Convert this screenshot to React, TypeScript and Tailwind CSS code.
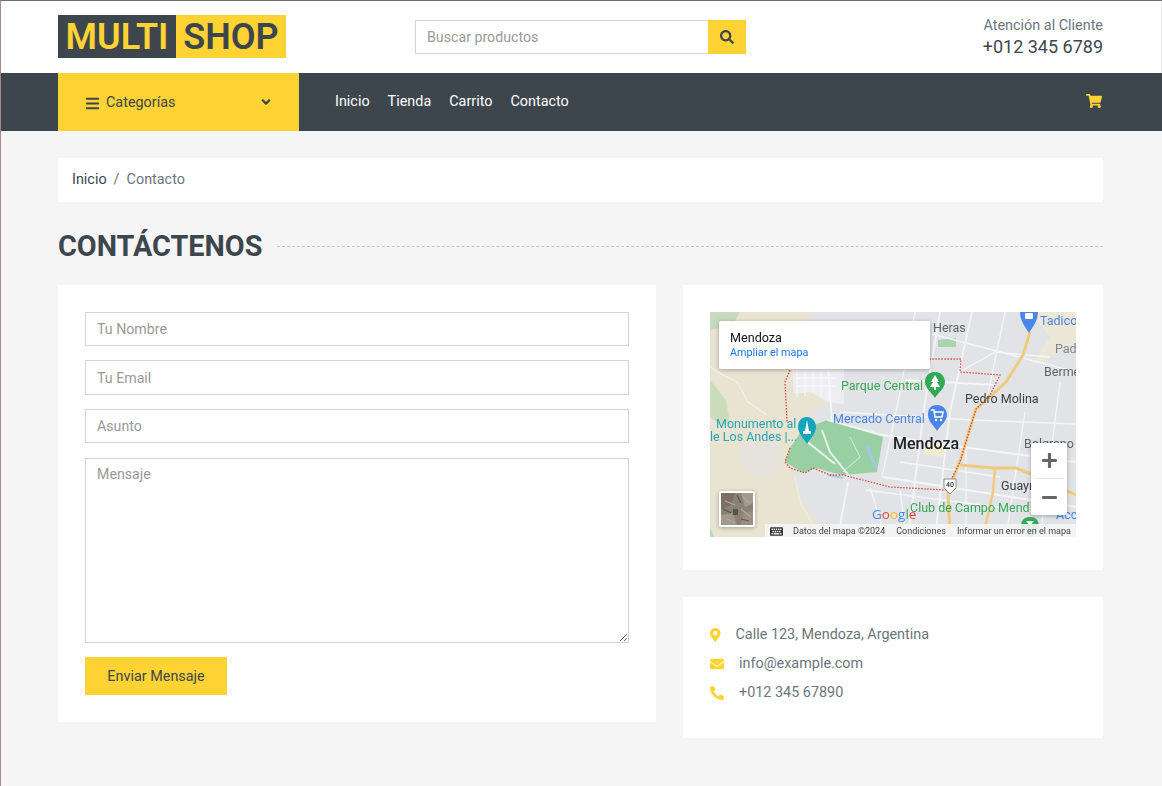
import { FaBars, FaAngleDown, FaSearch, FaShoppingCart, FaMapMarkerAlt, FaEnvelope, FaPhoneAlt, FaKeyboard, FaPlus, FaMinus } from "react-icons/fa";

function MapArt() {
  const green = "#34a853";
  return (
    <svg viewBox="0 0 366 225" width="366" height="225" className="block blur-[0.35px]" style={{ fontFamily: "Roboto, sans-serif" }}>
      <rect width="366" height="225" fill="#e2e3e7" />
      <path d="M0 0H100V60L117 62L118 90L100 100L80 136L85 165L92 190L120 225H0Z" fill="#e9e3d2" />
      <path d="M0 0H30L22 14L0 18Z" fill="#c6dabc" />
      <path d="M0 68L16 88L20 112L8 112L0 104Z" fill="#cbdcbd" />
      <path d="M30 132L68 130L70 160L42 165L30 150Z" fill="#e6e3dc" />
      <path d="M0 215L4 225H0Z" fill="#bcd6b7" />
      <path d="M320 0H366V30L340 45L320 55L340 25Z" fill="#ece7d6" />
      <path d="M82 57H134V92L118 90L100 80L84 82Z" fill="#eeeef2" />
      <path d="M228 28L246 26L246 35L228 35Z" fill="#a9d4b0" />
      <path d="M215 130L240 132L232 145L214 142Z" fill="#f1ebcf" />
      <path d="M80 136L92 118L117 108L173 125L167 160L133 163L120 160L107 156L93 161L75 150Z" fill="#98d0a3" />
      <path d="M157 133C160 142 163 150 167 156" stroke="#a7c6e6" strokeWidth="3" fill="none" />
      <path d="M118 163L133 166" stroke="#a7c6e6" strokeWidth="2" fill="none" />

      <g stroke="#f7f8fa" fill="none" strokeWidth="1.3" opacity="0.85">
        <path d="M87 58V85M95 58V84M103 58V80M111 58V84M119 60V88M87 66H126M87 74H126" />
        <path d="M117 40L122 110" strokeWidth="2" />
        <path d="M0 55L13 63L27 70L38 90L57 103" opacity="0.75" />
        <path d="M117 108L173 123L230 132L366 150" strokeWidth="1.8" />
        <path d="M112 118L120 140L140 165" strokeWidth="2" />
        <path d="M95 128L125 152" strokeWidth="2" />
        <path d="M140 125L150 145L133 160" strokeWidth="0.8" />
        <path d="M173 165L366 195" strokeWidth="1.8" />
        <path d="M205 0L188 90L172 165" />
        <path d="M230 0L215 90L198 225" strokeWidth="1.8" />
        <path d="M262 0L240 100L225 225" strokeWidth="1.8" />
        <path d="M295 0L278 82" />
        <path d="M315 100L296 225" />
        <path d="M350 70L330 225" />
        <path d="M130 100L262 108L366 112" />
        <path d="M195 68L285 73" strokeWidth="1.8" />
        <path d="M222 22L366 60" />
        <path d="M250 60L285 40L340 45" />
        <path d="M190 150L290 165" />
        <path d="M155 178L366 205" />
        <path d="M138 170L128 225" strokeWidth="1.8" />
        <path d="M160 175L175 225" />
        <path d="M190 178L196 225" />
        <path d="M256 130V225" />
        <path d="M85 165L90 190L110 225" opacity="0.5" />
      </g>
      <g stroke="#f0ca7c" fill="none" strokeWidth="3" strokeLinejoin="round">
        <path d="M320 20L313 43L296 70L283 82L266 97L261 113L251 146L238 180L240 225" />
        <path d="M250 153L283 156L306 156L323 163L366 183" />
        <path d="M285 156L283 180L273 225" strokeWidth="2.5" />
      </g>
      <path d="M80 58L75 70L77 110M80 136L75 150L80 156L95 161L103 156L120 163L133 163L180 175L236 178L250 150L261 113L266 97L280 83L290 63L250 60L251 47L220 47" stroke="#d9483f" strokeWidth="1.3" strokeDasharray="1.5 1.5" fill="none" />

      <text x="223" y="20" fontSize="12.5" fill="#5f6368">Heras</text>
      <path d="M310 0C310 9 316 16 319 21C322 16 328 9 328 0Z" fill="#4a86e8" />
      <rect x="315" y="1" width="8" height="6" rx="1" fill="#fff" />
      <text x="330" y="13" fontSize="12.5" fill="#4a86e8">Tadico</text>
      <text x="345" y="41" fontSize="12.5" fill="#80868b">Pad</text>
      <text x="334" y="64" fontSize="12.5" fill="#5f6368">Berme</text>
      <text x="131" y="78" fontSize="12.5" fill={green}>Parque Central</text>
      <path d="M225 60C217 60 215 66 215 70C215 76 222 81 225 86C228 81 235 76 235 70C235 66 232 60 225 60Z" fill={green} />
      <path d="M225 63L229 70H227L230 75H226V78H224V75H220L223 70H221Z" fill="#fff" />
      <text x="255" y="91" fontSize="12.5" fill="#3c4043">Pedro Molina</text>
      <text x="123" y="111" fontSize="12.5" fill="#4a86e8">Mercado Central</text>
      <path d="M227 93C219 93 218 99 218 103C218 109 224 114 227 119C230 114 237 109 237 103C237 99 234 93 227 93Z" fill="#4a86e8" />
      <path d="M221 98H224L225 105H232L233 100H225" stroke="#fff" strokeWidth="1.6" fill="none" />
      <circle cx="226" cy="108" r="1.2" fill="#fff" /><circle cx="231" cy="108" r="1.2" fill="#fff" />
      <text x="6" y="116" fontSize="12.5" fill="#26a6b8">Monumento al</text>
      <text x="0" y="129" fontSize="12.5" fill="#26a6b8">le Los Andes |...</text>
      <path d="M97 105C90 105 88 111 88 115C88 121 94 127 97 132C100 127 106 121 106 115C106 111 103 105 97 105Z" fill="#12a5bd" />
      <path d="M97 108L99 119H101V122H93V119H95Z" fill="#fff" />
      <text x="183" y="137" fontSize="16" fontWeight="500" fill="#202124">Mendoza</text>
      <text x="314" y="136" fontSize="12.5" fill="#5f6368">Bolgrano</text>
      <path d="M234 167H246V176L240 182L234 176Z" fill="#fff" stroke="#777" strokeWidth="0.8" />
      <text x="236" y="175" fontSize="7" fontWeight="500" fill="#333">40</text>
      <text x="291" y="178" fontSize="12.5" fill="#3c4043">Guayı</text>
      <text x="200" y="200" fontSize="12.5" fill={green}>Club de Campo Mend</text>
      <path d="M320 205C313 205 311 210 311 214C311 219 316 224 320 225C324 224 329 219 329 214C329 210 327 205 320 205Z" fill={green} />
      <path d="M316 209H324L320 214Z" fill="#fff" />
      <text x="346" y="207" fontSize="12.5" fill="#4a86e8">Acc</text>
      <text x="162" y="207" fontSize="13.5" fontWeight="500" fontFamily="Open Sans, sans-serif">
        <tspan fill="#4285f4">G</tspan><tspan fill="#ea4335">o</tspan><tspan fill="#fbbc05">o</tspan><tspan fill="#4285f4">g</tspan><tspan fill="#34a853">l</tspan><tspan fill="#ea4335">e</tspan>
      </text>
    </svg>
  );
}

function SatThumb() {
  return (
    <svg viewBox="0 0 32 32" width="32" height="32" className="block blur-[0.5px]">
      <rect width="32" height="32" fill="#8a8074" />
      <path d="M0 0H14L10 12L0 16Z" fill="#7a6f62" />
      <path d="M20 0H32V10L24 14Z" fill="#a39a8e" />
      <path d="M0 22L12 20L16 32H0Z" fill="#a1978a" />
      <path d="M22 20L32 18V32H20Z" fill="#9b8f83" />
      <rect x="12" y="16" width="5" height="6" fill="#4f5a44" />
      <path d="M4 8L14 12M20 16L30 24M6 26L14 30M22 4L28 10" stroke="#b3aa9e" strokeWidth="1.2" />
      <path d="M16 2L20 10M2 16L10 20M20 26L28 28" stroke="#5f564c" strokeWidth="1.2" />
    </svg>
  );
}

function Input({ placeholder, h }: { placeholder: string; h: string }) {
  return (
    <input
      readOnly
      placeholder={placeholder}
      className={`block w-full ${h} border border-[#ced4da] bg-white px-[11px] text-[14.2px] text-[#495057] outline-none placeholder:text-[#9a9a9a]`}
    />
  );
}

export default function App() {
  return (
    <div className="min-h-[786px] border-t border-l border-t-[#6e6e6e] border-l-[#a98a86] bg-[#f5f5f5] font-['Roboto',sans-serif] text-[#6c757d]">
      <header className="flex h-[72px] items-center border-r border-r-[#e8e8e8] bg-white pl-[57px] pr-[58px]">
        <div className="mt-[-1px] flex h-[43px] w-[228px] items-center text-[36px] font-semibold leading-none">
          <span className="flex h-full w-[118px] items-center justify-center bg-[#3d464d] text-[#ffd333]">MULTI</span>
          <span className="flex h-full w-[110px] items-center justify-center bg-[#ffd333] text-[#3d464d]">SHOP</span>
        </div>
        <div className="ml-[129px] mt-[-1px] flex h-[34px] w-[331px]">
          <input readOnly placeholder="Buscar productos" className="h-full min-w-0 flex-1 border border-[#ced4da] border-r-0 bg-white px-[11px] text-[14.2px] outline-none placeholder:text-[#9a9a9a]" />
          <div className="flex h-full w-[38px] items-center justify-center bg-[#ffd333] text-[#3d464d]">
            <FaSearch className="text-[14px]" />
          </div>
        </div>
        <div className="ml-auto mt-[-1px] text-right">
          <div className="text-[14.4px] leading-[20px]">Atención al Cliente</div>
          <div className="text-[18px] leading-[22px] text-[#3d464d]">+012 345 6789</div>
        </div>
      </header>

      <nav className="flex h-[58px] items-center bg-[#3d464d] pl-[57px] pr-[60px]">
        <div className="flex h-full w-[241px] items-center bg-[#ffd333] pl-[27px] pr-[27px] text-[#3d464d]">
          <FaBars className="mr-[6px] mt-[2px] text-[15px]" />
          <span className="mt-[2px] text-[14.4px]">Categorías</span>
          <FaAngleDown className="ml-auto mr-[-1px] text-[14px]" />
        </div>
        <div className="ml-[36px] flex gap-[18px] text-[14.4px] text-white">
          <span>Inicio</span>
          <span>Tienda</span>
          <span>Carrito</span>
          <span>Contacto</span>
        </div>
        <FaShoppingCart className="ml-auto mt-[-2px] text-[16px] text-[#ffd333]" />
      </nav>

      <main className="pl-[57px] pr-[58px] pt-[27px]">
        <div className="flex h-[44px] w-[1045px] items-center bg-white px-[14px] text-[14.4px]">
          <span className="text-[#3d464d]">Inicio</span>
          <span className="mx-[7px]">/</span>
          <span>Contacto</span>
        </div>

        <div className="mt-[27px] flex h-[34px] w-[1045px] items-center">
          <h2 className="text-[28.8px] font-bold leading-none text-[#3d464d]">CONTÁCTENOS</h2>
          <div className="ml-[15px] flex-1 border-t border-dashed border-[#c4c4c4]" />
        </div>

        <div className="mt-[22px] flex items-start gap-[27px]">
          <section className="flex w-[598px] flex-col bg-white p-[27px]">
            <Input placeholder="Tu Nombre" h="h-[34px]" />
            <div className="h-[14px]" />
            <Input placeholder="Tu Email" h="h-[35px]" />
            <div className="h-[14px]" />
            <Input placeholder="Asunto" h="h-[34px]" />
            <div className="h-[15px]" />
            <textarea
              readOnly
              placeholder="Mensaje"
              className="block h-[185px] w-full border border-[#ced4da] bg-white px-[11px] py-[5px] text-[14.2px] outline-none placeholder:text-[#9a9a9a]"
            />
            <div className="mt-[14px] flex h-[38px] w-[142px] items-center justify-center bg-[#ffd333] pt-[2px] text-[14.4px] text-[#3d464d]">
              Enviar Mensaje
            </div>
          </section>

          <aside className="flex w-[420px] flex-col gap-[27px]">
            <section className="bg-white p-[27px] pb-[33px]">
              <div className="relative h-[225px] w-[366px] overflow-hidden">
                <MapArt />
                <div className="absolute left-[9px] top-[9px] h-[48px] w-[211px] rounded-[2px] bg-white px-[11px] pt-[10px] shadow-[0_1px_4px_rgba(0,0,0,0.3)]">
                  <div className="text-[12.6px] leading-[14px] text-[#111]">Mendoza</div>
                  <div className="mt-[1px] text-[10.8px] leading-[13px] text-[#1a73e8]">Ampliar el mapa</div>
                </div>
                <div className="absolute left-[321px] top-[131px] flex h-[72px] w-[36px] flex-col items-center rounded-[2px] bg-white text-[#666] shadow-[0_1px_4px_rgba(0,0,0,0.3)]">
                  <div className="flex h-[35px] items-center justify-center"><FaPlus className="text-[17px]" /></div>
                  <div className="h-px w-[30px] bg-[#e6e6e6]" />
                  <div className="flex h-[36px] items-center justify-center"><FaMinus className="text-[17px]" /></div>
                </div>
                <div className="absolute left-[9px] top-[179px] h-[36px] w-[36px] overflow-hidden rounded-[2px] border-2 border-white shadow-[0_1px_4px_rgba(0,0,0,0.3)]">
                  <SatThumb />
                </div>
                <div className="absolute bottom-0 right-0 flex h-[13px] w-[311px] items-center bg-[#f5f5f5]/90 pl-[5px] pt-[1px] text-[9px] leading-none text-[#444]">
                  <FaKeyboard className="text-[13px] text-[#333]" />
                  <span className="ml-[10px]">Datos del mapa ©2024</span>
                  <span className="ml-[11px]">Condiciones</span>
                  <span className="ml-[11px]">Informar un error en el mapa</span>
                </div>
              </div>
            </section>

            <section className="flex h-[141px] flex-col bg-white pl-[27px] pt-[28px] text-[14.4px]">
              <div className="flex h-[20px] items-center">
                <FaMapMarkerAlt className="h-[14px] w-[10.5px] text-[#ffd333]" />
                <span className="ml-[15px]">Calle 123, Mendoza, Argentina</span>
              </div>
              <div className="mt-[9px] flex h-[20px] items-center">
                <FaEnvelope className="text-[14px] text-[#ffd333]" />
                <span className="ml-[15px]">info@example.com</span>
              </div>
              <div className="mt-[9px] flex h-[20px] items-center">
                <FaPhoneAlt className="text-[14px] text-[#ffd333]" />
                <span className="ml-[15px]">+012 345 67890</span>
              </div>
            </section>
          </aside>
        </div>
      </main>
    </div>
  );
}
